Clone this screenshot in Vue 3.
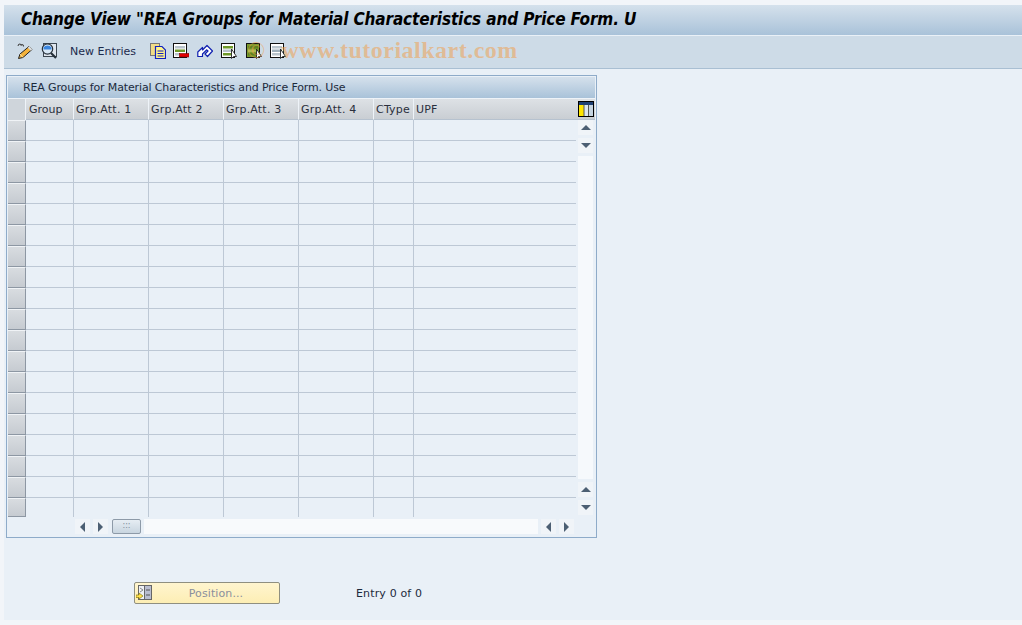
<template>
  <div class="screen">
    <div class="main">
      <div class="title-bar">
        <h1 class="title">Change View "REA Groups for Material Characteristics and Price Form. U</h1>
      </div>
      <div class="toolbar">
        <svg class="ico pencil" viewBox="0 0 16 16">
          <path d="M1 3 C1.500 .5 4 .5 4 2.500 C4.500 1 7 1.500 6.500 3.500" fill="none" stroke="#444" stroke-width="1.100" />
          <path d="M12 3.500 L15 6.500 L6 14.500 L1.500 15.500 L3 11 Z" fill="#f4b23a" stroke="#222" />
          <path d="M11.500 4 L14.500 7" stroke="#d9dde2" stroke-width="2" />
          <path d="M3 11 L6 14.500" stroke="#fbe3a6" />
        </svg>
        <svg class="ico glass" viewBox="0 0 16 16">
          <rect x="2.500" y=".5" width="13" height="13" fill="#dfe6ee" stroke="#3b4650" />
          <circle cx="6.500" cy="6" r="5.200" fill="#d8e8f6" stroke="#26303a" stroke-width="1.200" />
          <path d="M2.500 4.500 A5 5 0 0 1 10.500 4.500 L10.500 6.500 H2.500 Z" fill="#3a86e0" />
          <path d="M10 10 L15 15" stroke="#26303a" stroke-width="2.200" />
        </svg>
        <span class="new-entries">New Entries</span>
        <svg class="ico copy" viewBox="0 0 16 16">
          <rect x=".5" y=".5" width="9" height="12" fill="#f0dc86" stroke="#777" />
          <path d="M5.500 3.500 H12 L15.500 7 V15.500 H5.500 Z" fill="#fff48c" stroke="#1020c0" stroke-width="1.200" />
          <path d="M7.500 8 H13.500 M7.500 10.500 H13.500 M7.500 13 H13.500" stroke="#1020c0" />
        </svg>
        <svg class="ico del" viewBox="0 0 16 16">
          <rect x=".5" y=".5" width="13" height="14" fill="#fff" stroke="#111" />
          <rect x="2" y="3" width="10" height="2.500" fill="#b9c4cc" />
          <rect x="2" y="6.500" width="10" height="2.500" fill="#6f9a2a" />
          <rect x="2" y="10" width="5" height="2.500" fill="#b9c4cc" />
          <rect x="6.500" y="10.500" width="9.500" height="3.500" fill="#e00000" stroke="#700" stroke-width=".6" />
        </svg>
        <svg class="ico undo" viewBox="0 0 16 16">
          <path d="M.8 9 L5.500 4.500 V7 L10 2.500 L15.500 8 L10.500 13.500 L8 11 L11 8 L9.800 6.800 L5.500 11 V13.500 H.8 Z" fill="#fff" stroke="#1020b0" stroke-width="1.200" stroke-linejoin="round" />
        </svg>
        <svg v-for="kind in selIcons" :key="kind.cls" class="ico" :class="kind.cls" viewBox="0 0 16 16">
          <rect x=".5" y=".5" width="13" height="14" :fill="kind.bg" stroke="#111" />
          <rect x="2" y="3" width="10" height="2.500" :fill="kind.a" />
          <rect x="2" y="6.500" width="10" height="2.500" :fill="kind.b" />
          <rect x="2" y="10" width="10" height="2.500" :fill="kind.a" />
          <path d="M10.500 6 L10.500 15.500 L12.500 13.500 L15.500 13.500 Z" fill="#fff" stroke="#222" stroke-width=".9" />
        </svg>
      </div>

      <div class="watermark"><span class="copyright">©</span> www.tutorialkart.com</div>

      <div class="panel">
        <div class="panel-title">REA Groups for Material Characteristics and Price Form. Use</div>
        <div class="table-head">
          <div class="corner"></div>
          <div v-for="c in columns" :key="c.label" class="th" :style="{ width: c.width + 'px' }">{{ c.label }}</div>
          <div class="th th-fill">UPF</div>
          <div class="config-cell">
            <svg class="col-config" viewBox="0 0 16 16">
              <rect x=".5" y=".5" width="15" height="15" fill="#fff" stroke="#000" />
              <rect x="1" y="1" width="14" height="3" fill="#1d3f72" />
              <rect x="1" y="4" width="5" height="11" fill="#ffe600" />
              <rect x="6" y="4" width="4.500" height="11" fill="#dbe6ee" />
              <rect x="11" y="4" width="4" height="11" fill="#c5d4e0" />
              <path d="M6 4 V15 M10.500 4 V15" stroke="#555" />
            </svg>
          </div>
        </div>
        <div class="table-body">
          <div class="rows">
            <div v-for="r in 19" :key="r" class="row">
              <div class="row-head"></div>
              <div v-for="c in columns" :key="c.label" class="td" :style="{ width: c.width + 'px' }"></div>
              <div class="td-fill"></div>
            </div>
          </div>
          <div class="v-scroll">
            <div class="sbtn"><i class="tri up"></i></div>
            <div class="sbtn"><i class="tri down"></i></div>
            <div class="v-track"></div>
            <div class="sbtn"><i class="tri up"></i></div>
            <div class="sbtn"><i class="tri down"></i></div>
          </div>
        </div>
        <div class="h-scroll">
          <div class="sbtn"><i class="tri left"></i></div>
          <div class="sbtn"><i class="tri right"></i></div>
          <div class="thumb"><span>:::</span></div>
          <div class="h-track"></div>
          <div class="sbtn"><i class="tri left"></i></div>
          <div class="sbtn"><i class="tri right"></i></div>
        </div>
      </div>

      <div class="bottom">
        <button class="pos-btn">
          <svg class="pos-ico" viewBox="0 0 16 16">
            <rect x="2.500" y=".5" width="13" height="14" fill="#b9bdd0" stroke="#666" />
            <rect x="2.500" y=".5" width="6" height="14" fill="#eef0f5" stroke="#666" />
            <path d="M10 5 H14 M10 10 H14" stroke="#555" />
            <path d="M4 3 L7 5 L4 7" fill="none" stroke="#888" />
            <path d="M0 10 H3 V8 L7 11 L3 14 V12.500 H0 Z" fill="#ffe14d" stroke="#8a7a10" stroke-width=".7" />
          </svg>
          <span>Position...</span>
        </button>
        <span class="entry">Entry 0 of 0</span>
      </div>
    </div>
  </div>
</template>

<script setup>
const columns = [
  { label: 'Group', width: 48 },
  { label: 'Grp.Att. 1', width: 75 },
  { label: 'Grp.Att 2', width: 75 },
  { label: 'Grp.Att. 3', width: 75 },
  { label: 'Grp.Att. 4', width: 75 },
  { label: 'CType', width: 40 }
]

const selIcons = [
  { cls: 'sel1', bg: '#fff', a: '#6f9a2a', b: '#b9c4cc' },
  { cls: 'sel2', bg: '#7d9a2c', a: '#5f8420', b: '#a8bd50' },
  { cls: 'sel3', bg: '#fff', a: '#b9c4cc', b: '#9fb0bc' }
]
</script>

<style>
html,
body {
  margin: 0;
  background: #f2f5f9;
}
</style>

<style scoped>
.screen {
  width: 1022px;
  height: 625px;
  box-sizing: border-box;
  padding: 5px 0 5px 4px;
  overflow: hidden;
  font-family: "DejaVu Sans", sans-serif;
  color: #1c2a3c;
  background: #f2f5f9;
}

.main {
  height: 100%;
  position: relative;
  background: #e9f0f7;
}

.title-bar {
  height: 27px;
  padding: 0 0 3px 17px;
  display: flex;
  align-items: center;
  background: linear-gradient(#d5e1ec, #a9c2d9);
  border-bottom: 1px solid #e9f0f7;
}

.title {
  margin: 0;
  font-family: "DejaVu Sans Condensed", "DejaVu Sans", sans-serif;
  font-size: 17px;
  font-weight: bold;
  font-style: italic;
  letter-spacing: -.14px;
  color: #000;
  white-space: nowrap;
}

.toolbar {
  height: 32px;
  display: flex;
  align-items: center;
  background: #cddbe7;
  border-bottom: 1px solid #a9bfd3;
}

.ico {
  width: 16px;
  height: 16px;
  flex: none;
  margin-bottom: 2px;
}

.pencil { margin-left: 13px; }
.glass { margin-left: 8px; }
.copy { margin-left: 14px; }
.del { margin-left: 7px; }
.undo { margin-left: 8px; }
.sel1 { margin-left: 8px; }
.sel2 { margin-left: 9px; }
.sel3 { margin-left: 8px; }

.new-entries {
  margin: 0 0 2px 13px;
  font-size: 11px;
  letter-spacing: .03px;
  color: #1c2a4c;
}

.watermark {
  position: absolute;
  left: 243px;
  top: 32px;
  font-family: "Liberation Serif", serif;
  font-size: 24px;
  font-weight: bold;
  letter-spacing: .5px;
  color: rgba(240, 160, 80, .55);
  white-space: nowrap;
  pointer-events: none;
}

.copyright {
  margin-right: 9px;
  font-weight: normal;
}

.panel {
  width: 591px;
  height: 463px;
  box-sizing: border-box;
  margin: 6px 0 0 2px;
  padding: 1px;
  border: 1px solid #8eabc9;
  background: #e9f0f7;
}

.panel-title {
  height: 21px;
  line-height: 21px;
  padding-left: 15px;
  font-size: 11px;
  letter-spacing: -.14px;
  background: linear-gradient(#d5e1ec, #a9c2d9);
}

.table-head {
  height: 21px;
  display: flex;
  border-top: 1px solid #eef3f8;
}

.corner {
  width: 18px;
  box-sizing: border-box;
  flex: none;
  background: #cfd5db;
  border-right: 1px solid #eef3f8;
}

.th {
  flex: none;
  box-sizing: border-box;
  padding-left: 2px;
  line-height: 22px;
  font-size: 11px;
  letter-spacing: .2px;
  background: linear-gradient(#dde1e5, #c9ced3);
  border-right: 1px solid #eef3f8;
  border-bottom: 1px solid #b6c2cf;
  color: #2a2f3c;
}

.corner + .th {
  padding-left: 3px;
  letter-spacing: 0;
}

.th-fill {
  flex: 1;
  border-right: none;
}

.config-cell {
  width: 19px;
  flex: none;
  background: linear-gradient(#dde1e5, #c9ced3);
  border-bottom: 1px solid #b6c2cf;
  box-sizing: border-box;
  padding: 2px 0 0 2px;
}

.col-config {
  display: block;
  width: 16px;
  height: 16px;
}

.table-body {
  display: flex;
}

.rows {
  width: 568px;
  flex: none;
}

.row {
  height: 21px;
  display: flex;
}

.row:last-child {
  height: 19px;
}

.row-head {
  width: 18px;
  flex: none;
  box-sizing: border-box;
  background: linear-gradient(#d8dce0, #c6cbd1);
  border: 1px solid #8d97a3;
  border-width: 1px 1px 1px 0;
  border-top-color: #f0f3f6;
}

.td {
  flex: none;
  box-sizing: border-box;
  border-right: 1px solid #bdc8d5;
  border-bottom: 1px solid #bdc8d5;
}

.td-fill {
  flex: 1;
  border-bottom: 1px solid #bdc8d5;
}

.row:last-child .td,
.row:last-child .td-fill {
  border-bottom: none;
}

.v-scroll {
  width: 15px;
  margin: 0 0 2px 2px;
  display: flex;
  flex-direction: column;
  gap: 3px;
}

.v-track {
  flex: 1;
  background: #f6f9fc;
}

.sbtn {
  width: 15px;
  height: 15px;
  display: flex;
  align-items: center;
  justify-content: center;
  background: #f0f4f8;
  flex: none;
}

.tri {
  display: block;
  width: 0;
  height: 0;
  border: 5px solid transparent;
}

.tri.up {
  border-top-width: 0;
  border-bottom-color: #4c5f73;
}

.tri.down {
  border-bottom-width: 0;
  border-top-color: #4c5f73;
}

.tri.left {
  border-left-width: 0;
  border-right-color: #4c5f73;
}

.tri.right {
  border-right-width: 0;
  border-left-color: #4c5f73;
}

.h-scroll {
  height: 15px;
  margin-top: 2px;
  padding: 0 21px 0 67px;
  display: flex;
  gap: 3px;
}

.thumb {
  width: 29px;
  height: 15px;
  margin-left: 1px;
  box-sizing: border-box;
  border: 1px solid #8d9aa8;
  border-radius: 2px;
  background: linear-gradient(#e6edf3, #c8d5e0);
  font-size: 8px;
  line-height: 11px;
  text-align: center;
  color: #7c8a98;
}

.h-track {
  flex: 1;
  background: #f8fafc;
}

.bottom {
  margin-top: 44px;
  padding-left: 130px;
  display: flex;
  align-items: center;
}

.pos-btn {
  width: 146px;
  height: 22px;
  padding: 0;
  position: relative;
  box-sizing: border-box;
  border: 1px solid #8f8f80;
  border-radius: 2px;
  background: linear-gradient(#fff5cf, #fdeeb4);
  font-family: inherit;
  font-size: 11px;
  letter-spacing: .1px;
  color: #8a8f9c;
  text-align: center;
}

.pos-btn span {
  padding-left: 18px;
}

.pos-ico {
  position: absolute;
  left: 1px;
  top: 2px;
  width: 16px;
  height: 16px;
}

.entry {
  margin-left: 76px;
  font-size: 11px;
  letter-spacing: .15px;
}
</style>
